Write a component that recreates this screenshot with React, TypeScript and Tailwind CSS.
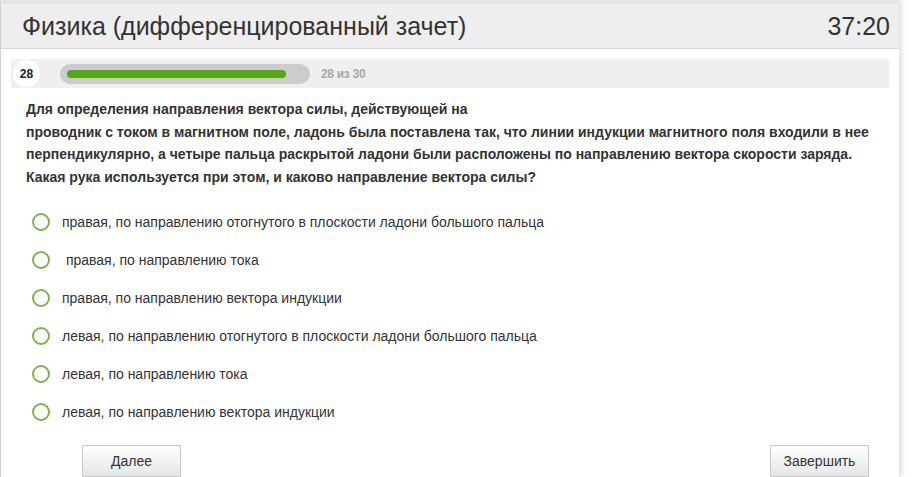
import React from "react";

const options = [
  "правая, по направлению отогнутого в плоскости ладони большого пальца",
  "\u00a0правая, по направлению тока",
  "правая, по направлению вектора индукции",
  "левая, по направлению отогнутого в плоскости ладони большого пальца",
  "левая, по направлению тока",
  "левая, по направлению вектора индукции",
];

export default function App() {
  return (
    <div className="w-[916px] h-[477px] overflow-hidden bg-white" style={{ fontFamily: '"Liberation Sans", Arial, sans-serif' }}>
      <div className="w-[899px] h-[477px] border-l border-l-[#cfcfcf] border-t-[4px] border-t-[#e4e4e4] shadow-[3px_0_5px_rgba(0,0,0,0.12)] flex flex-col">
        <div className="h-[48px] bg-[#eeeeee] border-b border-[#d9d9d9] flex items-center justify-between pl-[21px] pr-[9px]">
          <div className="text-[25px] text-[#333] leading-none">Физика (дифференцированный зачет)</div>
          <div className="text-[25px] text-[#333] leading-none">37:20</div>
        </div>
        <div className="mt-[10px] mx-[10px] h-[31px] bg-[#efefef] flex items-center pl-[2px]">
          <div className="w-[27px] h-[27px] rounded-full bg-white flex items-center justify-center text-[12px] font-bold text-[#222]">28</div>
          <div className="ml-[20px] w-[250px] h-[20px] rounded-full bg-[#cccccc] flex items-center px-[7px]">
            <div className="w-[219px] h-[8px] rounded-full bg-[#56a812]"></div>
          </div>
          <div className="ml-[11px] text-[12px] font-bold text-[#a8a8a8] tracking-[-0.3px]">28 из 30</div>
        </div>
        <div className="pl-[25px] pr-[20px] pt-[10px] text-[14px] font-bold text-[#333] leading-[22.4px]">
          Для определения направления вектора силы, действующей на
          <br />
          проводник с током в магнитном поле, ладонь была поставлена так, что линии индукции магнитного поля входили в нее перпендикулярно, а четыре пальца раскрытой ладони были расположены по направлению вектора скорости заряда. Какая рука используется при этом, и каково направление вектора силы?
        </div>
        <div className="mt-[24px] flex flex-col gap-[18px] pl-[31px]">
          {options.map((o, i) => (
            <div key={i} className="flex items-center h-[20px]">
              <div className="w-[18px] h-[18px] rounded-full border-2 border-[#7bb44a] bg-white"></div>
              <div className="ml-[12px] text-[14px] text-[#333]">{o}</div>
            </div>
          ))}
        </div>
        <div className="mt-[23px] flex justify-between pl-[81px] pr-[30px]">
          <button className="w-[99px] h-[32px] border border-[#c8c8c8] bg-gradient-to-b from-white to-[#e6e6e6] text-[14px] text-[#333] flex items-center justify-center">Далее</button>
          <button className="w-[99px] h-[32px] border border-[#c8c8c8] bg-gradient-to-b from-white to-[#e6e6e6] text-[14px] text-[#333] flex items-center justify-center">Завершить</button>
        </div>
      </div>
    </div>
  );
}
